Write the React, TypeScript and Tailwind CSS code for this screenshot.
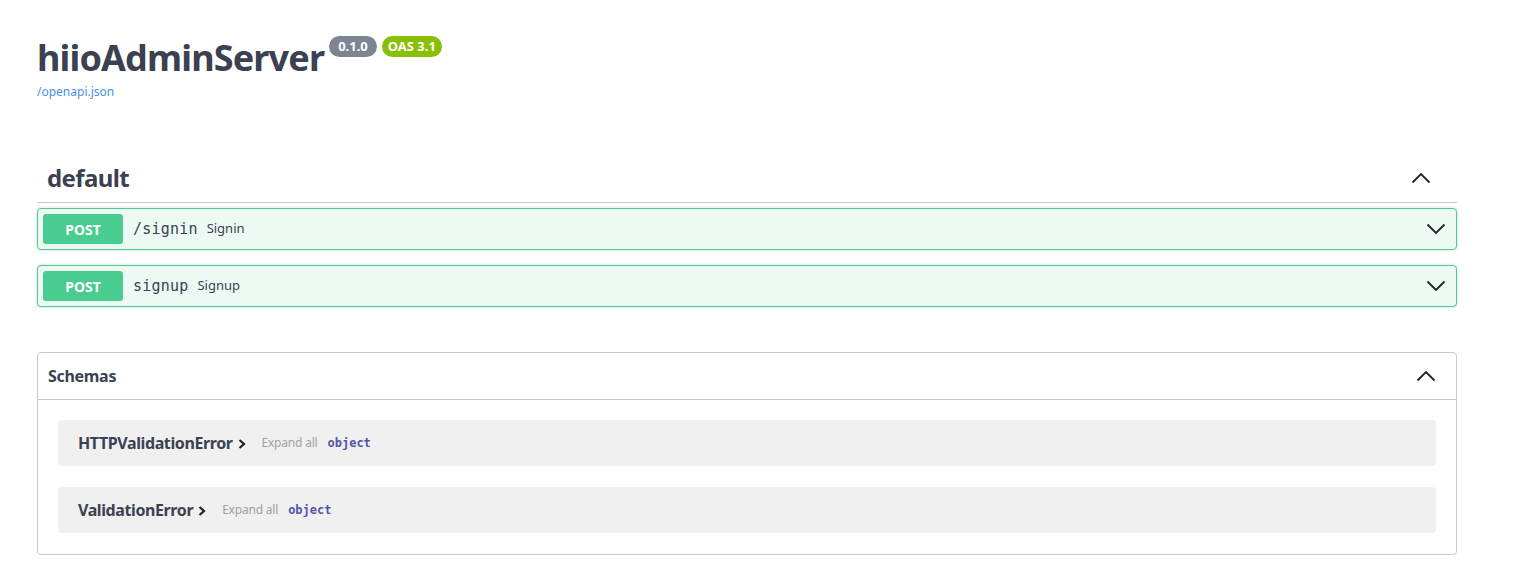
import React from "react";

const sans = "font-['Noto_Sans',_'Open_Sans',_sans-serif]";
const mono = "font-['DejaVu_Sans_Mono',_'Liberation_Mono',_monospace]";

function ChevronUp({ className = "" }: { className?: string }) {
  return (
    <svg width="20" height="20" viewBox="0 0 20 20" className={className}>
      <path d="M1.5 14.5 L10 6 L18.5 14.5" fill="none" stroke="#222" strokeWidth="1.8" />
    </svg>
  );
}
function ChevronDown({ className = "" }: { className?: string }) {
  return (
    <svg width="20" height="20" viewBox="0 0 20 20" className={className}>
      <path d="M1.5 5.5 L10 14 L18.5 5.5" fill="none" stroke="#222" strokeWidth="1.8" />
    </svg>
  );
}
function ChevronRight() {
  return (
    <svg width="10" height="12" viewBox="0 0 10 12" className="ml-[4px] mt-[2px]">
      <path d="M2.5 2 L7 6 L2.5 10" fill="none" stroke="#222" strokeWidth="2.2" />
    </svg>
  );
}

function Op({ path, summary }: { path: string; summary: string }) {
  return (
    <div className="flex items-center h-[42px] border border-[#49cc90] bg-[#edfaf4] rounded-[4px] px-[5px] shadow-[0_0_3px_rgba(0,0,0,0.19)]">
      <div className="w-[80px] h-[30px] rounded-[3px] bg-[#49cc90] text-white font-bold text-[14px] flex items-center justify-center">
        POST
      </div>
      <span className={`${mono} ml-[10px] text-[15px] font-normal text-[#3b4151] tracking-[0.2px]`}>{path}</span>
      <span className="ml-[9px] text-[13px] text-[#3b4151]">{summary}</span>
      <div className="flex-1" />
      <ChevronDown className="mr-[5px]" />
    </div>
  );
}

function Model({ name }: { name: string }) {
  return (
    <div className="h-[46px] bg-[#f0f0f0] rounded-[4px] flex items-center px-[20px]">
      <span className="text-[16px] font-bold text-[#3b4151] tracking-[-0.4px]">{name}</span>
      <ChevronRight />
      <span className="ml-[15px] text-[12px] text-[#a0a0a0] tracking-[-0.2px]">Expand all</span>
      <span className={`${mono} ml-[10px] text-[12px] font-bold text-[#55a]`}>object</span>
    </div>
  );
}

export default function App() {
  return (
    <div className={`${sans} bg-white w-[1516px] h-[584px] overflow-hidden text-[#3b4151]`}>
      <div className="w-[1420px] ml-[37px]">
        <div className="pt-[30px]">
          <div className="flex items-start">
            <h1 className="text-[36px] font-bold leading-[56px] text-[#3b4151] tracking-[-0.85px]">hiioAdminServer</h1>
            <div className="flex ml-[5px] mt-[6px] gap-[5px]">
              <span className="h-[21px] px-[9px] rounded-full bg-[#7d8492] text-white text-[13px] font-bold flex items-center">0.1.0</span>
              <span className="h-[21px] px-[6px] rounded-full bg-[#89bf04] text-white text-[13px] font-bold flex items-center">OAS 3.1</span>
            </div>
          </div>
          <a className="block text-[12px] text-[#4990e2] leading-[16px] -mt-[2px]">/openapi.json</a>
        </div>

        <div className="mt-[53px]">
          <div className="flex items-center h-[50px] border-b border-[#c8c8c8] pl-[10px] pr-[26px]">
            <h3 className="text-[24px] font-bold text-[#3b4151] flex-1 tracking-[-0.6px]">default</h3>
            <ChevronUp />
          </div>
          <div className="mt-[5px] flex flex-col gap-[15px]">
            <Op path="/signin" summary="Signin" />
            <Op path="signup" summary="Signup" />
          </div>
        </div>

        <div className="mt-[45px] border border-[#c8c8c8] rounded-[4px]">
          <div className="h-[47px] flex items-center border-b border-[#c8c8c8] pl-[10px] pr-[20px]">
            <span className="flex-1 text-[16px] font-bold text-[#3b4151] tracking-[-0.3px]">Schemas</span>
            <ChevronUp />
          </div>
          <div className="px-[20px] pt-[20px] pb-[21px] flex flex-col gap-[21px]">
            <Model name="HTTPValidationError" />
            <Model name="ValidationError" />
          </div>
        </div>
      </div>
    </div>
  );
}
